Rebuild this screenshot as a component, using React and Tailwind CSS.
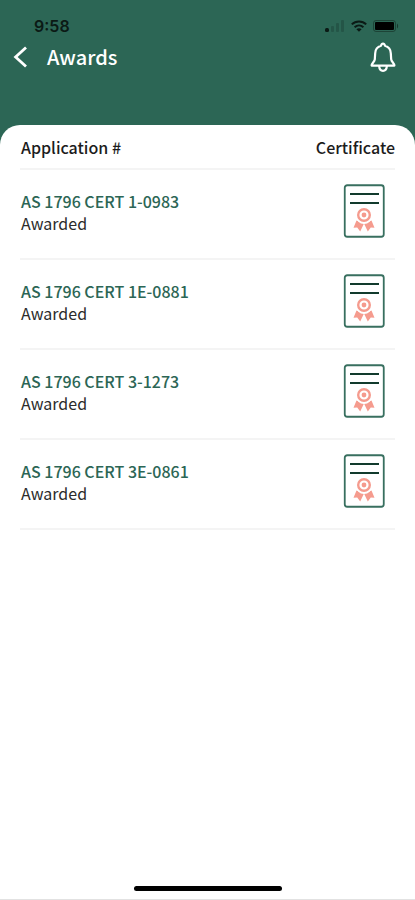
import React from 'react';

const awards = [
  { id: 'AS 1796 CERT 1-0983', status: 'Awarded' },
  { id: 'AS 1796 CERT 1E-0881', status: 'Awarded' },
  { id: 'AS 1796 CERT 3-1273', status: 'Awarded' },
  { id: 'AS 1796 CERT 3E-0861', status: 'Awarded' },
];

function StatusIcons() {
  return (
    <div className="flex items-center gap-1.5 text-[#0b1a15]" aria-hidden="true">
      <svg width="20" height="12" viewBox="0 0 20 12" fill="currentColor">
        <rect x="0" y="8" width="4" height="4" rx="1.5" />
        <rect x="6" y="6" width="3" height="6" rx="1" opacity="0.22" />
        <rect x="11" y="3" width="3" height="9" rx="1" opacity="0.22" />
        <rect x="16" y="0" width="3" height="12" rx="1" opacity="0.22" />
      </svg>
      <svg width="16" height="12" viewBox="0 0 16 12" fill="none" stroke="currentColor" strokeWidth="2">
        <path d="M0.8 4.4C4.8 0.4 11.2 0.4 15.2 4.4" />
        <path d="M3.6 7.3C6.2 4.9 9.8 4.9 12.4 7.3" />
        <path d="M8 11.8L5.4 9.3C6.8 8 9.2 8 10.6 9.3Z" fill="currentColor" stroke="none" />
      </svg>
      <svg width="26" height="12" viewBox="0 0 26 12">
        <rect x="0.5" y="0.5" width="22" height="11" rx="2.5" fill="none" stroke="currentColor" opacity="0.45" />
        <rect x="2" y="2" width="19" height="8" rx="1" fill="#000" />
        <path d="M24 3.5C25.5 4.3 25.5 7.7 24 8.5Z" fill="currentColor" opacity="0.6" />
      </svg>
    </div>
  );
}

function BellIcon() {
  return (
    <svg width="28" height="32" viewBox="0 0 28 32" fill="none" stroke="#fff" strokeWidth="2.2" strokeLinejoin="round" strokeLinecap="round">
      <path d="M14 2.6C12.9 2.6 12.3 3.6 12 4.8C8.4 5.8 6.4 8.6 6.2 12.2L5.8 18.4C5.6 20.8 2.6 22.4 2.6 24.6H25.4C25.4 22.4 22.4 20.8 22.2 18.4L21.8 12.2C21.6 8.6 19.6 5.8 16 4.8C15.7 3.6 15.1 2.6 14 2.6Z" />
      <path d="M10.2 25.4C10.4 28.4 12 29.8 14 29.8S17.6 28.4 17.8 25.4" />
    </svg>
  );
}

function CertificateIcon() {
  return (
    <svg width="42" height="54" viewBox="0 0 42 54" fill="none">
      <rect x="1.75" y="1.25" width="39" height="51.5" rx="2.5" stroke="#386f5f" strokeWidth="1.8" />
      <path d="M7 10H36M7 19H36" stroke="#123b2d" strokeWidth="2" />
      <g fill="#f59b8e">
        <path d="M13.5 36.5L10.5 43.8L14.2 43.4L17.2 47.6L21 39.5Z" />
        <path d="M28.5 36.5L31.5 43.8L27.8 43.4L24.8 47.6L21 39.5Z" />
      </g>
      <circle cx="21" cy="32" r="8" fill="#fff" />
      <circle cx="21" cy="31" r="5.8" stroke="#f59b8e" strokeWidth="2.4" />
      <circle cx="21" cy="31" r="2.4" fill="#f59b8e" />
    </svg>
  );
}

export default function App() {
  return (
    <div className="min-h-screen flex flex-col bg-[#2c6655] font-['Noto_Sans_CJK_SC','Noto_Sans',sans-serif] text-[#2b2b2b]">
      <header className="h-[125px] pt-4">
        <div className="h-5 pl-[34px] pr-4 flex items-center justify-between">
          <span className="font-['Inter',sans-serif] text-base font-semibold leading-5 text-[#0b1a15]">9:58</span>
          <StatusIcons />
        </div>
        <div className="h-[42px] pl-3 pr-[18px] flex items-center">
          <button type="button" aria-label="Back" className="w-[35px] cursor-pointer">
            <svg width="16" height="22" viewBox="0 0 16 22" fill="none" stroke="#fff" strokeWidth="2.8">
              <path d="M14 1.5L3.6 11L14 20.5" />
            </svg>
          </button>
          <h1 className="text-xl leading-8 font-medium text-white">Awards</h1>
          <button type="button" aria-label="Notifications" className="ml-auto cursor-pointer">
            <BellIcon />
          </button>
        </div>
      </header>

      <main className="flex-1 flex flex-col rounded-t-[20px] bg-white px-5">
        <table className="w-full border-collapse">
          <thead>
            <tr className="h-11 border-b-2 border-[#f4f4f4] text-base leading-6 text-[#1c1c1c]">
              <th className="p-0 pl-px text-left font-medium">Application #</th>
              <th className="p-0 text-right font-medium">Certificate</th>
            </tr>
          </thead>
          <tbody>
            {awards.map((award) => (
              <tr key={award.id} className="h-[90px] border-b-2 border-[#f4f4f4]">
                <td className="p-0 pb-1 pl-px text-base leading-[22px]">
                  <p className="font-medium text-[#2c6655]">{award.id}</p>
                  <p>{award.status}</p>
                </td>
                <td className="p-0 pr-2.5 pb-1.5">
                  <button type="button" aria-label={`Open certificate ${award.id}`} className="ml-auto block cursor-pointer">
                    <CertificateIcon />
                  </button>
                </td>
              </tr>
            ))}
          </tbody>
        </table>
        <div className="mt-auto mb-2 h-[5px] w-[148px] self-center rounded-full bg-black" />
      </main>
      <div className="h-px bg-[#e2e2e2]" />
    </div>
  );
}
